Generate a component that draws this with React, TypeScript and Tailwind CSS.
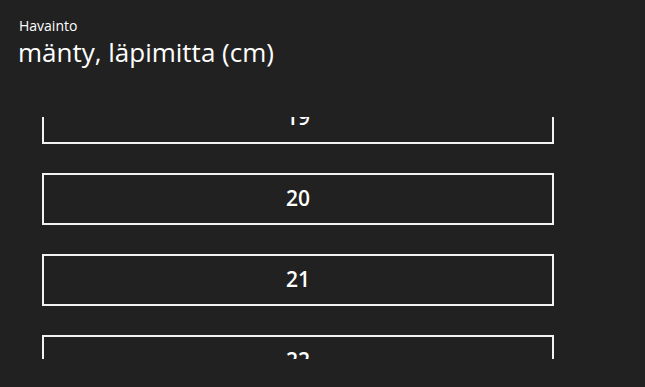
const values = [19, 20, 21, 22];

const App = () => {
  return (
    <div
      className="w-[645px] h-[387px] bg-[#212121] text-white overflow-hidden"
      style={{ fontFamily: '"Open Sans", "Noto Sans", sans-serif' }}
    >
      <div className="pl-[19px] pt-[17px]">
        <p className="text-[14px] leading-[18px]">Havainto</p>
        <h1 className="text-[26px] leading-[34px] -ml-[1px]">mänty, läpimitta (cm)</h1>
      </div>

      <div className="mt-[48px] h-[242px] overflow-hidden">
        <div className="-mt-[25px] flex flex-col gap-[29px] pl-[42px]">
          {values.map((v) => (
            <div
              key={v}
              className="w-[512px] h-[52px] border-2 border-[#f2f2f2] flex items-center justify-center text-[21px] font-semibold"
            >
              {v}
            </div>
          ))}
        </div>
      </div>
    </div>
  );
};

export default App;
